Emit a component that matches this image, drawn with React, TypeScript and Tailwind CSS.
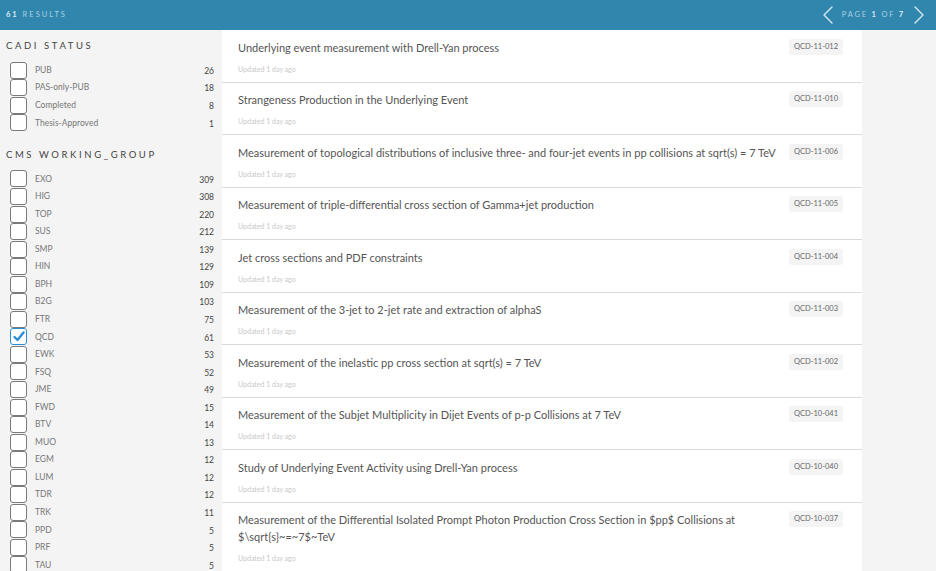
import React from "react";

type Facet = { label: string; count: number; checked?: boolean };

const STATUS: Facet[] = [
  { label: "PUB", count: 26 },
  { label: "PAS-only-PUB", count: 18 },
  { label: "Completed", count: 8 },
  { label: "Thesis-Approved", count: 1 },
];

const GROUPS: Facet[] = [
  { label: "EXO", count: 309 },
  { label: "HIG", count: 308 },
  { label: "TOP", count: 220 },
  { label: "SUS", count: 212 },
  { label: "SMP", count: 139 },
  { label: "HIN", count: 129 },
  { label: "BPH", count: 109 },
  { label: "B2G", count: 103 },
  { label: "FTR", count: 75 },
  { label: "QCD", count: 61, checked: true },
  { label: "EWK", count: 53 },
  { label: "FSQ", count: 52 },
  { label: "JME", count: 49 },
  { label: "FWD", count: 15 },
  { label: "BTV", count: 14 },
  { label: "MUO", count: 13 },
  { label: "EGM", count: 12 },
  { label: "LUM", count: 12 },
  { label: "TDR", count: 12 },
  { label: "TRK", count: 11 },
  { label: "PPD", count: 5 },
  { label: "PRF", count: 5 },
  { label: "TAU", count: 5 },
];

const RESULTS = [
  { title: "Underlying event measurement with Drell-Yan process", code: "QCD-11-012" },
  { title: "Strangeness Production in the Underlying Event", code: "QCD-11-010" },
  {
    title:
      "Measurement of topological distributions of inclusive three- and four-jet events in pp collisions at sqrt(s) = 7 TeV",
    code: "QCD-11-006",
  },
  { title: "Measurement of triple-differential cross section of Gamma+jet production", code: "QCD-11-005" },
  { title: "Jet cross sections and PDF constraints", code: "QCD-11-004" },
  { title: "Measurement of the 3-jet to 2-jet rate and extraction of alphaS", code: "QCD-11-003" },
  { title: "Measurement of the inelastic pp cross section at sqrt(s) = 7 TeV", code: "QCD-11-002" },
  { title: "Measurement of the Subjet Multiplicity in Dijet Events of p-p Collisions at 7 TeV", code: "QCD-10-041" },
  { title: "Study of Underlying Event Activity using Drell-Yan process", code: "QCD-10-040" },
  {
    title:
      "Measurement of the Differential Isolated Prompt Photon Production Cross Section in $pp$ Collisions at $\\sqrt{s}~=~7$~TeV",
    code: "QCD-10-037",
  },
];

function Checkbox({ checked }: { checked?: boolean }) {
  return (
    <span
      className={
        checked
          ? "flex h-[17px] w-[17px] shrink-0 items-center justify-center rounded-[3px] border border-[#2b8fd6] bg-white"
          : "flex h-[17px] w-[17px] shrink-0 items-center justify-center rounded-[3px] border border-[#7a7a7a] bg-white"
      }
    >
      {checked && (
        <svg width="12" height="11" viewBox="0 0 12 11" fill="none">
          <path d="M1.5 6 L4.5 9 L10.5 1.5" stroke="#2b8fd6" strokeWidth="2.4" strokeLinecap="round" strokeLinejoin="round" />
        </svg>
      )}
    </span>
  );
}

function FacetGroup({ title, items }: { title: string; items: Facet[] }) {
  return (
    <div>
      <h3 className="pl-[6px] text-[9.5px] tracking-[2.6px] text-[#444] leading-none">{title}</h3>
      <ul className="mt-[11px] pl-[10px] pr-[8px]">
        {items.map((f) => (
          <li key={f.label} className="flex h-[17.55px] items-center">
            <Checkbox checked={f.checked} />
            <span className="ml-[8px] flex-1 text-[8.5px] text-[#777]">{f.label}</span>
            <span className="text-[8.5px] text-[#444] mt-[2px]">{f.count}</span>
          </li>
        ))}
      </ul>
    </div>
  );
}

function Chevron({ dir }: { dir: "left" | "right" }) {
  return (
    <svg width="12" height="18" viewBox="0 0 12 18" fill="none">
      <path
        d={dir === "left" ? "M10 1 L2 9 L10 17" : "M2 1 L10 9 L2 17"}
        stroke="#d6e8f1"
        strokeWidth="1.4"
        strokeLinecap="round"
        strokeLinejoin="round"
      />
    </svg>
  );
}

export default function App() {
  return (
    <div className="flex h-[571px] w-[936px] flex-col overflow-hidden bg-[#f4f4f4] font-['Lato','Open_Sans',sans-serif]">
      <header className="flex h-[30px] shrink-0 items-center justify-between bg-[#3186ae] pl-[6px] pr-[11px]">
        <div className="text-[7.5px] tracking-[2px] text-[#a7d0e3]">
          <span className="font-bold text-[#dbeaf2]">61</span> RESULTS
        </div>
        <div className="flex items-center gap-[8px]">
          <Chevron dir="left" />
          <span className="text-[7.5px] tracking-[1.8px] text-[#a7d0e3]">
            PAGE <span className="font-bold text-[#dbeaf2]">1</span> OF <span className="font-bold text-[#dbeaf2]">7</span>
          </span>
          <Chevron dir="right" />
        </div>
      </header>
      <div className="flex flex-1 min-h-0">
        <aside className="w-[222px] shrink-0 pt-[11px]">
          <FacetGroup title="CADI STATUS" items={STATUS} />
          <div className="mt-[18px]">
            <FacetGroup title="CMS WORKING_GROUP" items={GROUPS} />
          </div>
        </aside>
        <main className="w-[640px] shrink-0 bg-white">
          {RESULTS.map((r) => (
            <div key={r.code} className="border-b border-[#d9d9d9] pl-[16px] pr-[19px] pt-[8.5px] pb-[8px]">
              <div className="flex items-start justify-between gap-[6px]">
                <p className="text-[11px] leading-[17px] text-[#555]">{r.title}</p>
                <span className="shrink-0 rounded-[3px] bg-[#f4f4f4] px-[5px] py-[3px] text-[7.5px] leading-[10px] text-[#666]">
                  {r.code}
                </span>
              </div>
              <p className="mt-[8px] text-[7px] leading-[10px] text-[#c9c9c9]">Updated 1 day ago</p>
            </div>
          ))}
        </main>
        <div className="flex-1" />
      </div>
    </div>
  );
}
